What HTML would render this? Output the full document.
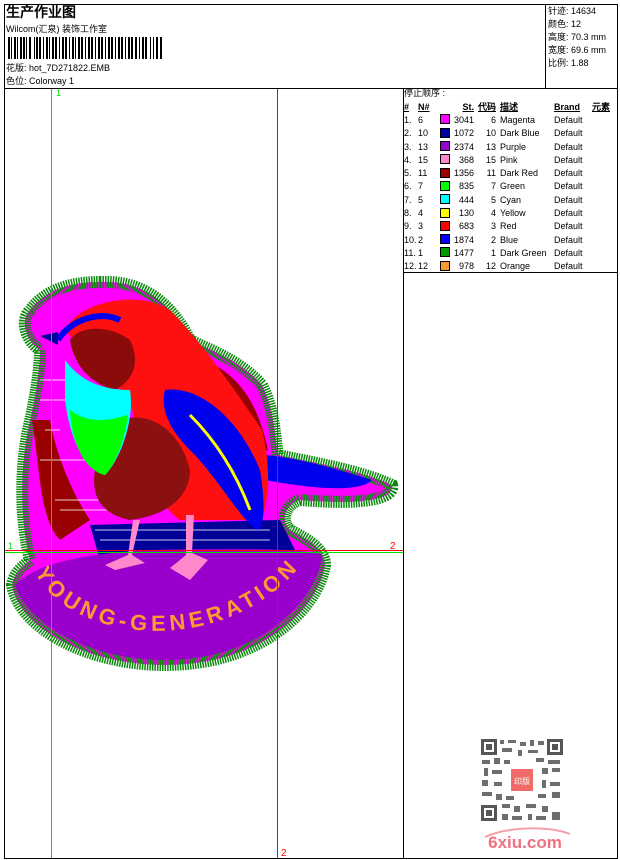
<!DOCTYPE html>
<html><head><meta charset="utf-8"><style>
body{margin:0;width:620px;height:860px;background:#fff;font-family:"Liberation Sans","WenQuanYi Zen Hei",sans-serif;color:#000;position:relative;overflow:hidden}
.a{position:absolute}
.t{font-size:9px;line-height:13px}
table{border-collapse:collapse;font-size:9px}
td{padding:0;height:13.3px;white-space:nowrap}
.sw{display:inline-block;width:8px;height:8px;border:1px solid #000;vertical-align:-1px}
</style></head><body>
<div class="a" style="left:4px;top:4px;width:612px;height:853px;border:1px solid #000"></div>
<div class="a" style="left:4px;top:88px;width:613px;height:1px;background:#000"></div>
<div class="a" style="left:545px;top:4px;width:1px;height:84px;background:#000"></div>
<div class="a" style="left:403px;top:88px;width:1px;height:770px;background:#000"></div>
<div class="a" style="left:403px;top:272px;width:214px;height:1px;background:#000"></div>

<div class="a" style="left:6px;top:4px;font-size:14px;font-weight:bold;line-height:17px">生产作业图</div>
<div class="a t" style="left:6px;top:23px">Wilcom(汇泉) 装饰工作室</div>
<svg class="a" style="left:8px;top:37px" width="155" height="22">
<g fill="#000">
<rect x="0" y="0" width="2" height="22"/><rect x="3" y="0" width="1" height="22"/><rect x="6" y="0" width="2" height="22"/><rect x="9" y="0" width="1" height="22"/><rect x="12" y="0" width="2" height="22"/><rect x="15" y="0" width="2" height="22"/><rect x="18" y="0" width="1" height="22"/><rect x="21" y="0" width="2" height="22"/><rect x="26" y="0" width="1" height="22"/><rect x="28" y="0" width="2" height="22"/><rect x="31" y="0" width="2" height="22"/><rect x="35" y="0" width="1" height="22"/><rect x="38" y="0" width="2" height="22"/><rect x="41" y="0" width="1" height="22"/><rect x="44" y="0" width="2" height="22"/><rect x="47" y="0" width="2" height="22"/><rect x="51" y="0" width="1" height="22"/><rect x="54" y="0" width="2" height="22"/><rect x="57" y="0" width="2" height="22"/><rect x="61" y="0" width="1" height="22"/><rect x="64" y="0" width="2" height="22"/><rect x="67" y="0" width="1" height="22"/><rect x="70" y="0" width="2" height="22"/><rect x="73" y="0" width="2" height="22"/><rect x="77" y="0" width="1" height="22"/><rect x="80" y="0" width="2" height="22"/><rect x="83" y="0" width="2" height="22"/><rect x="87" y="0" width="1" height="22"/><rect x="90" y="0" width="2" height="22"/><rect x="93" y="0" width="2" height="22"/><rect x="97" y="0" width="1" height="22"/><rect x="100" y="0" width="2" height="22"/><rect x="103" y="0" width="2" height="22"/><rect x="107" y="0" width="1" height="22"/><rect x="110" y="0" width="2" height="22"/><rect x="113" y="0" width="2" height="22"/><rect x="117" y="0" width="1" height="22"/><rect x="120" y="0" width="2" height="22"/><rect x="123" y="0" width="2" height="22"/><rect x="127" y="0" width="2" height="22"/><rect x="131" y="0" width="1" height="22"/><rect x="134" y="0" width="2" height="22"/><rect x="137" y="0" width="2" height="22"/><rect x="142" y="0" width="1" height="22"/><rect x="145" y="0" width="1" height="22"/><rect x="148" y="0" width="2" height="22"/><rect x="152" y="0" width="2" height="22"/>
</g></svg>
<div class="a t" style="left:6px;top:62px">花版: hot_7D271822.EMB</div>
<div class="a t" style="left:6px;top:75px">色位: Colorway 1</div>

<div class="a t" style="left:548px;top:5px">针迹: 14634<br>颜色: 12<br>高度: 70.3 mm<br>宽度: 69.6 mm<br>比例: 1.88</div>

<div class="a t" style="left:404px;top:87px">停止顺序 :</div>
<table class="a" style="left:404px;top:100px">
<tr style="font-weight:bold;text-decoration:underline"><td style="width:14px">#</td><td style="width:22px">N#</td><td style="width:10px"></td><td style="width:24px;text-align:right">St.</td><td style="width:22px;text-align:right">代码</td><td style="width:54px;padding-left:4px">描述</td><td style="width:36px">Brand</td><td style="padding-left:2px">元素</td></tr>
<tr><td>1.</td><td>6</td><td><span class="sw" style="background:#f0f"></span></td><td style="text-align:right">3041</td><td style="text-align:right">6</td><td style="padding-left:4px">Magenta</td><td>Default</td><td></td></tr>
<tr><td>2.</td><td>10</td><td><span class="sw" style="background:#00009a"></span></td><td style="text-align:right">1072</td><td style="text-align:right">10</td><td style="padding-left:4px">Dark Blue</td><td>Default</td><td></td></tr>
<tr><td>3.</td><td>13</td><td><span class="sw" style="background:#9a00cc"></span></td><td style="text-align:right">2374</td><td style="text-align:right">13</td><td style="padding-left:4px">Purple</td><td>Default</td><td></td></tr>
<tr><td>4.</td><td>15</td><td><span class="sw" style="background:#ff88cc"></span></td><td style="text-align:right">368</td><td style="text-align:right">15</td><td style="padding-left:4px">Pink</td><td>Default</td><td></td></tr>
<tr><td>5.</td><td>11</td><td><span class="sw" style="background:#990000"></span></td><td style="text-align:right">1356</td><td style="text-align:right">11</td><td style="padding-left:4px">Dark Red</td><td>Default</td><td></td></tr>
<tr><td>6.</td><td>7</td><td><span class="sw" style="background:#0f0"></span></td><td style="text-align:right">835</td><td style="text-align:right">7</td><td style="padding-left:4px">Green</td><td>Default</td><td></td></tr>
<tr><td>7.</td><td>5</td><td><span class="sw" style="background:#0ff"></span></td><td style="text-align:right">444</td><td style="text-align:right">5</td><td style="padding-left:4px">Cyan</td><td>Default</td><td></td></tr>
<tr><td>8.</td><td>4</td><td><span class="sw" style="background:#ff0"></span></td><td style="text-align:right">130</td><td style="text-align:right">4</td><td style="padding-left:4px">Yellow</td><td>Default</td><td></td></tr>
<tr><td>9.</td><td>3</td><td><span class="sw" style="background:#f00"></span></td><td style="text-align:right">683</td><td style="text-align:right">3</td><td style="padding-left:4px">Red</td><td>Default</td><td></td></tr>
<tr><td>10.</td><td>2</td><td><span class="sw" style="background:#00f"></span></td><td style="text-align:right">1874</td><td style="text-align:right">2</td><td style="padding-left:4px">Blue</td><td>Default</td><td></td></tr>
<tr><td>11.</td><td>1</td><td><span class="sw" style="background:#009900"></span></td><td style="text-align:right">1477</td><td style="text-align:right">1</td><td style="padding-left:4px">Dark Green</td><td>Default</td><td></td></tr>
<tr><td>12.</td><td>12</td><td><span class="sw" style="background:#ff9933"></span></td><td style="text-align:right">978</td><td style="text-align:right">12</td><td style="padding-left:4px">Orange</td><td>Default</td><td></td></tr>
</table>

<svg class="a" style="left:0;top:0" width="403" height="860">
<path d="M100,282 C140,280 170,300 190,340 C210,350 240,360 262,385 C275,410 275,440 278,455 C310,462 360,470 392,485 C395,500 360,505 300,500 C285,505 280,520 290,530 C310,540 325,550 325,565 C318,610 260,665 165,665 C90,665 20,630 12,585 C15,570 25,565 30,560 C20,520 20,470 28,430 C35,400 40,370 40,350 C25,340 20,320 30,310 C45,290 70,282 100,282 Z" fill="#f0f" stroke="#0a8a0a" stroke-width="12" stroke-dasharray="1.5 1"/>
<path d="M32,420 C40,470 40,520 60,540 L90,520 C70,490 55,450 50,420 Z" fill="#990000"/>
<path d="M195,355 C230,370 255,390 268,450 L245,455 C230,410 215,385 195,365 Z" fill="#990000"/>
<path d="M90,525 L280,520 L300,560 L100,560 Z" fill="#000099"/>
<g stroke="#fff" stroke-width="1" opacity=".8">
<line x1="40" y1="380" x2="70" y2="380"/><line x1="40" y1="400" x2="70" y2="400"/><line x1="40" y1="460" x2="100" y2="460"/><line x1="55" y1="500" x2="130" y2="500"/><line x1="95" y1="530" x2="270" y2="530"/><line x1="100" y1="540" x2="270" y2="540"/><line x1="60" y1="510" x2="120" y2="510"/><line x1="45" y1="430" x2="60" y2="430"/>
</g>
<path d="M15,585 C30,570 60,555 150,550 C230,548 300,548 322,555 C318,600 260,660 165,660 C95,660 30,628 15,585 Z" fill="#9a00cc"/>
<defs><path id="arc" d="M35,572 C70,645 230,660 305,560"/></defs>
<text font-family="Liberation Sans" font-weight="bold" font-size="22" fill="#ff9933"><textPath href="#arc" textLength="300">YOUNG-GENERATION</textPath></text>
<path d="M265,455 C300,458 340,470 372,480 C360,492 320,490 265,480 Z" fill="#0000ee"/>
<path d="M65,330 C80,300 140,290 170,310 C200,340 235,390 262,430 C272,470 268,500 262,520 L180,520 C150,500 140,440 130,400 Z" fill="#ff1010"/>
<path d="M165,390 C200,385 240,420 260,470 C265,500 265,525 258,530 C240,520 220,480 190,450 C170,430 160,410 165,390 Z" fill="#0000ee"/>
<path d="M190,415 C215,440 235,470 250,510" stroke="#ff0" stroke-width="3" fill="none"/>
<path d="M70,340 C80,325 110,325 130,340 C140,360 135,380 115,390 C95,385 75,370 70,340 Z" fill="#8b0a0a"/>
<path d="M120,420 C150,410 180,430 190,470 C190,495 170,515 130,520 C105,515 90,500 95,470 Z" fill="#8b1010"/>
<path d="M65,360 C80,380 100,390 130,390 C135,420 120,460 105,475 C85,470 70,440 65,400 Z" fill="#00ffff"/>
<path d="M70,410 C90,425 110,420 128,415 C125,440 115,465 105,475 C85,470 72,445 70,410 Z" fill="#00ff00"/>
<path d="M58,340 C70,320 100,310 120,320" stroke="#0000ee" stroke-width="6" fill="none"/>
<path d="M40,336 L58,332 L58,345 Z" fill="#000099"/>
<path d="M133,520 L140,520 L132,555 L145,563 L115,570 L105,565 L128,555 Z" fill="#ff88cc"/>
<path d="M186,515 L194,515 L192,553 L208,560 L190,580 L170,568 L186,555 Z" fill="#ff88cc"/>
<line x1="51.5" y1="89" x2="51.5" y2="858" stroke="#00e000"/>
<line x1="277.5" y1="89" x2="277.5" y2="858" stroke="#f00"/>
<line x1="5" y1="550.5" x2="403" y2="550.5" stroke="#f00"/>
<line x1="5" y1="552.5" x2="403" y2="552.5" stroke="#00e000"/>
<text x="56" y="96" font-size="9" fill="#00e000" font-family="Liberation Sans">1</text>
<text x="8" y="549" font-size="9" fill="#00e000" font-family="Liberation Sans">1</text>
<text x="390" y="549" font-size="10" fill="#f00" font-family="Liberation Sans">2</text>
<text x="281" y="856" font-size="10" fill="#f00" font-family="Liberation Sans">2</text>
</svg>

<svg class="a" style="left:480px;top:738px" width="90" height="115">
<rect x="0" y="0" width="84" height="84" fill="#fff"/>
<g fill="#555">
<rect x="1" y="1" width="16" height="16"/><rect x="67" y="1" width="16" height="16"/><rect x="1" y="67" width="16" height="16"/>
</g>
<g fill="#fff"><rect x="4" y="4" width="10" height="10"/><rect x="70" y="4" width="10" height="10"/><rect x="4" y="70" width="10" height="10"/></g>
<g fill="#555"><rect x="6" y="6" width="6" height="6"/><rect x="72" y="6" width="6" height="6"/><rect x="6" y="72" width="6" height="6"/></g>
<g fill="#555" opacity=".85">
<rect x="20" y="2" width="4" height="4"/><rect x="28" y="2" width="8" height="3"/><rect x="40" y="4" width="6" height="4"/><rect x="50" y="2" width="4" height="6"/><rect x="58" y="3" width="6" height="4"/>
<rect x="22" y="10" width="10" height="4"/><rect x="38" y="12" width="4" height="6"/><rect x="48" y="12" width="10" height="3"/>
<rect x="2" y="22" width="8" height="4"/><rect x="14" y="20" width="6" height="6"/><rect x="24" y="22" width="6" height="4"/><rect x="56" y="20" width="8" height="4"/><rect x="68" y="22" width="12" height="4"/>
<rect x="4" y="30" width="4" height="8"/><rect x="12" y="32" width="10" height="4"/><rect x="62" y="30" width="6" height="6"/><rect x="72" y="30" width="8" height="4"/>
<rect x="2" y="42" width="6" height="6"/><rect x="14" y="44" width="8" height="4"/><rect x="62" y="42" width="4" height="8"/><rect x="70" y="44" width="10" height="4"/>
<rect x="2" y="54" width="10" height="4"/><rect x="16" y="56" width="6" height="6"/><rect x="26" y="58" width="8" height="4"/><rect x="58" y="56" width="8" height="4"/><rect x="72" y="54" width="8" height="6"/>
<rect x="22" y="66" width="8" height="4"/><rect x="34" y="68" width="6" height="6"/><rect x="46" y="66" width="10" height="4"/><rect x="62" y="68" width="6" height="6"/>
<rect x="22" y="76" width="6" height="6"/><rect x="32" y="78" width="10" height="4"/><rect x="48" y="76" width="4" height="6"/><rect x="56" y="78" width="10" height="4"/><rect x="72" y="74" width="8" height="8"/>
</g>
<rect x="31" y="31" width="22" height="22" fill="#f06a6a"/>
<text x="42" y="46" font-size="8" fill="#fff" text-anchor="middle" font-family="WenQuanYi Zen Hei">印版</text>
<path d="M5,99 C30,88 70,88 90,96" stroke="#f4a0a8" stroke-width="2" fill="none"/>
<text x="45" y="110" font-size="17" font-weight="bold" fill="#f07080" text-anchor="middle" font-family="Liberation Sans">6xiu.com</text>
</svg>
</body></html>
